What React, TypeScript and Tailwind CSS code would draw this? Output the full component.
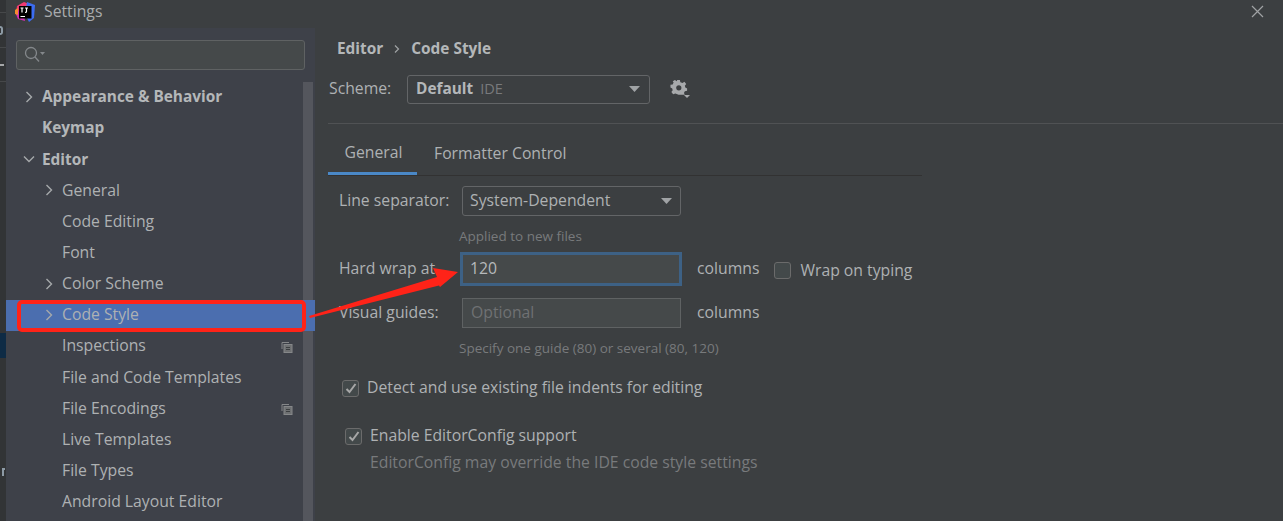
import React from "react";

const font = { fontFamily: '"Open Sans", "Noto Sans", sans-serif' };

function Chevron({ open = false }: { open?: boolean }) {
  return (
    <svg width="12" height="12" viewBox="0 0 12 12" fill="none" stroke="#a6a9ab" strokeWidth="1.4">
      {open ? <path d="M1 3.5 L6 8.5 L11 3.5" /> : <path d="M3.5 1 L8.5 6 L3.5 11" />}
    </svg>
  );
}

function Caret() {
  return (
    <svg width="11" height="6" viewBox="0 0 11 6">
      <path d="M0 0 H11 L5.5 6 Z" fill="#a0a3a5" />
    </svg>
  );
}

function CopyIcon() {
  return (
    <svg width="12" height="12" viewBox="0 0 12 12" fill="none" stroke="#858789" strokeWidth="1">
      <path d="M1 8 V1.5 H8" />
      <rect x="3" y="3.5" width="8" height="8" fill="#6e7072" />
      <path d="M5 6.5 H9 M5 8.5 H9" stroke="#3c3f41" />
    </svg>
  );
}

function Check({ on }: { on: boolean }) {
  return (
    <span className="flex h-[17px] w-[17px] shrink-0 items-center justify-center rounded-[3px] border border-[#6b6b6b] bg-[#43494a]">
      {on && (
        <svg width="12" height="11" viewBox="0 0 12 11" fill="none" stroke="#a7a7a7" strokeWidth="2">
          <path d="M1.5 6 L4.5 9 L10.5 1" />
        </svg>
      )}
    </span>
  );
}

type Item = { label: string; level: 0 | 1; arrow?: "open" | "closed"; bold?: boolean; copy?: boolean; selected?: boolean };

const items: Item[] = [
  { label: "Appearance & Behavior", level: 0, arrow: "closed", bold: true },
  { label: "Keymap", level: 0, bold: true },
  { label: "Editor", level: 0, arrow: "open", bold: true },
  { label: "General", level: 1, arrow: "closed" },
  { label: "Code Editing", level: 1 },
  { label: "Font", level: 1 },
  { label: "Color Scheme", level: 1, arrow: "closed" },
  { label: "Code Style", level: 1, arrow: "closed", selected: true },
  { label: "Inspections", level: 1, copy: true },
  { label: "File and Code Templates", level: 1 },
  { label: "File Encodings", level: 1, copy: true },
  { label: "Live Templates", level: 1 },
  { label: "File Types", level: 1 },
  { label: "Android Layout Editor", level: 1 },
];

function Row({ item }: { item: Item }) {
  return (
    <div
      className={`relative flex h-[31.2px] shrink-0 items-center ${item.selected ? "z-10 bg-[#4b6eaf]" : ""} ${item.level === 0 ? "pl-[17px]" : "pl-[37px]"}`}
    >
      <span className="flex w-[19px] shrink-0 items-center">{item.arrow && <Chevron open={item.arrow === "open"} />}</span>
      <span className={`whitespace-nowrap ${item.bold ? "text-[15.4px] font-bold text-[#b4b7b9]" : "text-[15.75px] text-[#aeb1b3]"}`}>{item.label}</span>
      {item.copy && (
        <span className="absolute right-[22px] top-[10px]">
          <CopyIcon />
        </span>
      )}
      {item.selected && (
        <span className="absolute left-[11px] right-[9px] top-0 h-[32px] rounded-[5px] border-[4px] border-[#ff2318]" />
      )}
    </div>
  );
}

function Sidebar() {
  return (
    <aside className="relative flex h-[493px] w-[309px] shrink-0 flex-col overflow-hidden bg-[#3e4149]">
      <div className="px-[10px] pt-[12px]">
        <div className="flex h-[30px] w-[289px] items-center rounded-[3px] border border-[#5f6263] bg-[#45494a] pl-[7px]">
          <svg width="22" height="18" viewBox="0 0 22 18" fill="none" stroke="#84888b" strokeWidth="1.3">
            <circle cx="7" cy="7" r="5.5" />
            <path d="M11 11 L15 15.5" />
            <path d="M16 6 H21 L18.5 9 Z" fill="#84888b" stroke="none" />
          </svg>
        </div>
      </div>
      <div className="absolute bottom-0 left-[297px] top-[54px] w-[10px] bg-[#54565d]" />
      <div className="relative mt-[11.2px] min-h-0 flex-1">
        {items.map((item) => (
          <Row key={item.label} item={item} />
        ))}
      </div>
    </aside>
  );
}

function Tabs() {
  return (
    <div className="flex h-[52px] w-[594px] items-end border-b border-[#323232]">
      <div className="flex h-full w-[89px] items-center justify-center border-b-[3px] border-[#4a88c7] pl-[2px] pt-[9px] text-[15.75px] text-[#aeb1b3]">General</div>
      <div className="ml-[17px] flex h-full items-center pt-[8px] text-[15.75px] text-[#aeb1b3]">Formatter Control</div>
    </div>
  );
}

export default function App() {
  return (
    <div className="relative flex h-[521px] w-[1283px] overflow-hidden bg-[#3c3f41] text-[15.75px]" style={font}>
      <div className="relative h-full w-[6px] shrink-0 bg-[#323436]">
        <div className="absolute left-0 top-[12px] h-px w-full bg-[#46484a]" />
        <div className="absolute left-0 top-[47px] h-px w-full bg-[#46484a]" />
        <div className="absolute left-0 top-[81px] h-px w-full bg-[#46484a]" />
        <div className="absolute left-0 top-[64px] h-[2px] w-[4px] bg-[#a5a7a9]" />
        <div className="absolute left-0 top-[26px] h-[9px] w-[3px] rounded-r-full border-2 border-l-0 border-[#8d9aa5]" />
        <div className="absolute left-0 top-[333px] h-[25px] w-full bg-[#0e2b45]" />
        <div className="absolute left-[2px] top-[468px] h-[8px] w-[3px] border-l-2 border-t-2 border-[#8d9aa5]" />
      </div>
      <div className="flex min-w-0 flex-1 flex-col">
        <header className="flex h-[28px] shrink-0 items-center pb-[5px] pl-[9px] pr-[19px]">
          <svg width="20" height="20" viewBox="0 0 20 20">
            <path d="M2 4 L9 0 L14 2 L8 10 L1 10 Z" fill="#f03a72" />
            <path d="M12 0 L20 3 L19 16 L14 20 L10 12 Z" fill="#3c6cf0" />
            <path d="M0 10 L8 8 L10 19 L3 17 Z" fill="#d02fb0" />
            <path d="M0 8 L3 6 L3 13 L0 12 Z" fill="#f58a2e" />
            <rect x="4" y="4" width="12.5" height="12.5" fill="#000" />
            <path d="M5.5 6 H8.5 M7 6 V10.5 M10 6 H13 M11.5 6 V9.5 Q11.5 10.5 10 10.5" stroke="#fff" strokeWidth="1.2" fill="none" />
            <rect x="5.5" y="14" width="4.5" height="1" fill="#fff" />
          </svg>
          <span className="ml-[9px] text-[15.75px] text-[#a9acae]">Settings</span>
          <svg className="ml-auto" width="13" height="13" viewBox="0 0 13 13" stroke="#a0a2a4" strokeWidth="1.2">
            <path d="M1 1 L12 12 M12 1 L1 12" />
          </svg>
        </header>
        <div className="flex min-h-0 flex-1">
          <Sidebar />
          <main className="min-w-0 flex-1 pl-[13px]">
            <div className="flex h-[42px] items-center pl-[9px] text-[15.4px] font-bold text-[#b4b7b9]">
              <span>Editor</span>
              <svg className="ml-[11px] mr-[11px]" width="6" height="8" viewBox="0 0 6 8" fill="none" stroke="#a0a3a5" strokeWidth="1.2"><path d="M1 0.5 L4.5 4 L1 7.5" /></svg>
              <span>Code Style</span>
            </div>
            <div className="mt-[4px] flex h-[30px] items-center pl-[1px]">
              <span className="w-[78px] text-[#aeb1b3]">Scheme:</span>
              <div className="flex h-[29px] w-[243px] items-center rounded-[3px] border border-[#636567] px-[8px]">
                <span className="text-[15.4px] font-bold text-[#b4b7b9]">Default</span>
                <span className="ml-[7px] text-[14.5px] text-[#787a7c]">IDE</span>
                <span className="ml-auto mr-[1px]"><Caret /></span>
              </div>
              <svg className="ml-[20px]" width="20" height="20" viewBox="0 0 20 20">
                <path d="M8 1 H11 L11.5 3.5 L14 4.5 L16 3 L18 5.5 L16.5 7.5 L17 9.5 L19 10.5 V13 L16.5 13.5 L15.5 15.5 L16.5 17.5 L9.5 17.5 L6 16 L3.5 17 L1.5 14.5 L3 12.5 L2.5 10.5 L0.5 9.5 V6.5 L3 6 L4 4 L3 2.5 L5.5 1 L7.5 2.5 Z" fill="#a7a9ab" transform="scale(0.9)" />
                <circle cx="8.8" cy="8.8" r="2.6" fill="#3c3f41" />
                <path d="M14 16 H20 L17 19 Z" fill="#a7a9ab" />
              </svg>
            </div>
            <div className="mt-[19px] h-px bg-[#505254]" />
            <Tabs />
            <div className="ml-[11px] mt-[9px] w-[600px]">
              <div className="flex h-[32px] items-center">
                <span className="w-[123px] text-[#aeb1b3]">Line separator:</span>
                <div className="flex h-[30px] w-[219px] items-center rounded-[3px] border border-[#636567] pl-[7px] pr-[8px] text-[#aeb1b3]">
                  System-Dependent
                  <span className="ml-auto"><Caret /></span>
                </div>
              </div>
              <div className="ml-[120px] mt-[9px] text-[13.5px] leading-[20px] text-[#787a7c]">Applied to new files</div>
              <div className="mt-[5px] flex h-[36px] items-center">
                <span className="w-[121px] text-[#aeb1b3]">Hard wrap at</span>
                <div className="flex h-[34px] w-[222px] items-center border-[3px] border-[#3d6185] bg-[#45494a] pl-[7px] text-[#b6b9bb]">120</div>
                <span className="ml-[15px] text-[#aeb1b3]">columns</span>
                <span className="ml-[15px] mt-[3px]"><Check on={false} /></span>
                <span className="ml-[9px] mt-[3px] text-[#aeb1b3]">Wrap on typing</span>
              </div>
              <div className="mt-[10px] flex h-[32px] items-center">
                <span className="w-[123px] text-[#aeb1b3]">Visual guides:</span>
                <div className="flex h-[30px] w-[219px] items-center border border-[#5f6263] bg-[#45494a] pl-[8px] text-[#6f7173]">Optional</div>
                <span className="ml-[16px] text-[#aeb1b3]">columns</span>
              </div>
              <div className="ml-[120px] mt-[9px] text-[13.5px] leading-[20px] text-[#787a7c]">Specify one guide (80) or several (80, 120)</div>
              <div className="ml-[3px] mt-[19px] flex h-[22px] items-center gap-[8px] text-[#aeb1b3]">
                <Check on />
                <span>Detect and use existing file indents for editing</span>
              </div>
              <div className="ml-[6px] mt-[26px] flex h-[22px] items-center gap-[8px] text-[#aeb1b3]">
                <Check on />
                <span>Enable EditorConfig support</span>
              </div>
              <div className="ml-[31px] mt-[4px] leading-[22px] text-[#787a7c]">EditorConfig may override the IDE code style settings</div>
            </div>
          </main>
        </div>
      </div>
      <svg className="pointer-events-none absolute left-0 top-0 z-20" width="1283" height="521" viewBox="0 0 1283 521">
        <path d="M309 316 L437 277 L433 268 L458 272 L440 287 L439 285.5 L310 318 Z" fill="#ff2318" />
      </svg>
    </div>
  );
}
